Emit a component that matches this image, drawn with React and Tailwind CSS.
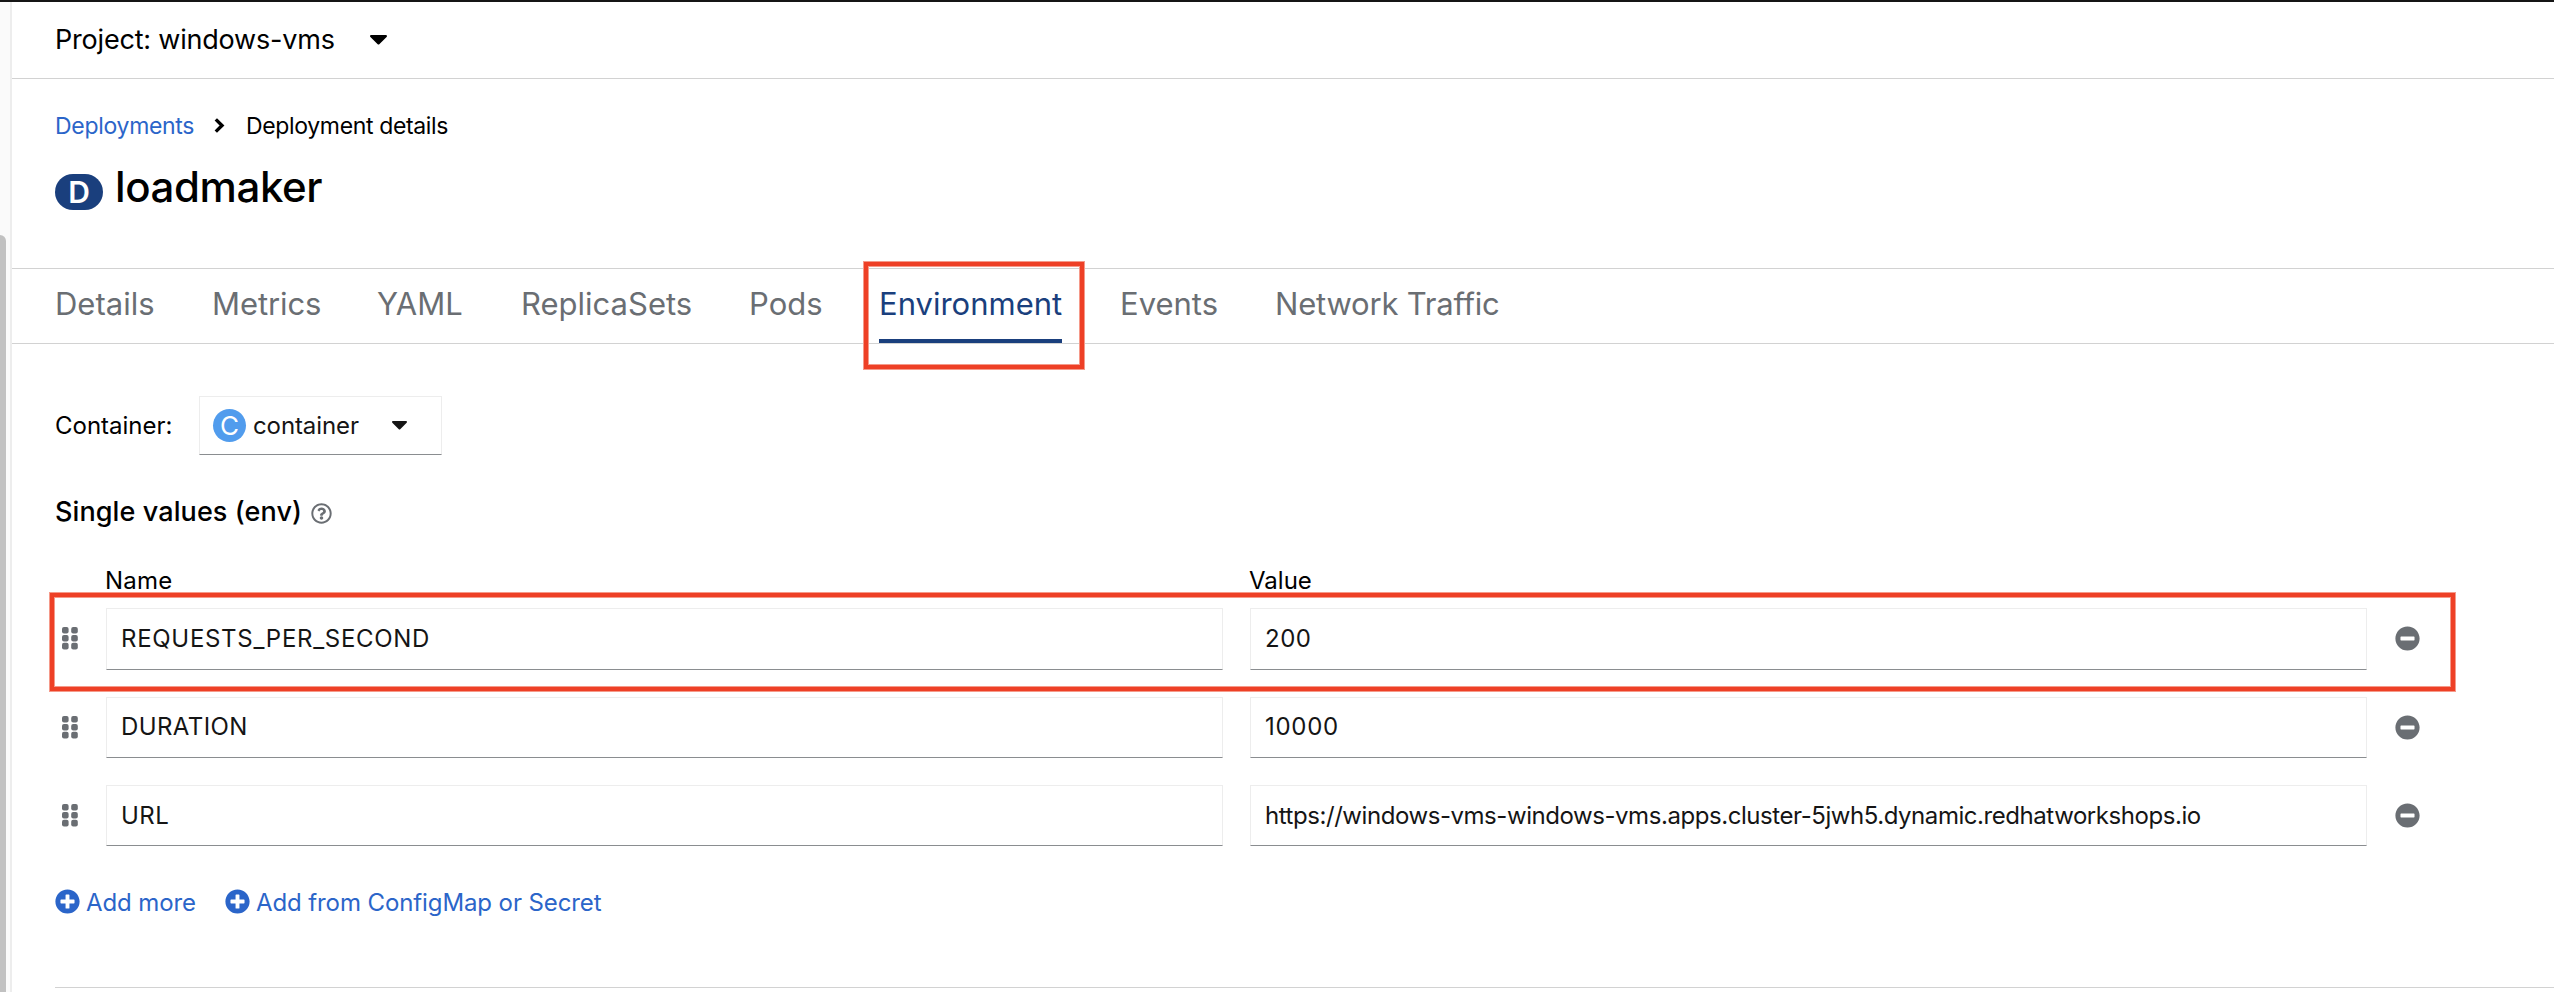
import { FaMinusCircle, FaPlusCircle, FaRegQuestionCircle } from "react-icons/fa";

const tabs = [
  { label: "Details", width: "w-[100px]" },
  { label: "Metrics", width: "w-[108px]", tracking: "tracking-[-0.1px]" },
  { label: "YAML", width: "w-[87px]" },
  { label: "ReplicaSets", width: "w-[170px]" },
  { label: "Pods", width: "w-[74px]", tracking: "pl-px" },
  { label: "Environment", width: "w-[183px]", active: true },
  { label: "Events", width: "w-[98px]", tracking: "pl-px" },
  { label: "Network Traffic", width: "w-[230px]", tracking: "pl-px tracking-[-0.2px]" },
];

const rows = [
  {
    name: "REQUESTS_PER_SECOND",
    value: "200",
    height: "h-[62px]",
    nameTracking: "tracking-[0.7px]",
    valueTracking: "tracking-[0.5px]",
    highlighted: true,
  },
  {
    name: "DURATION",
    value: "10000",
    height: "h-[61px]",
    nameTracking: "tracking-[0.4px]",
    valueTracking: "tracking-[0.7px]",
    inset: "pb-px",
  },
  {
    name: "URL",
    value: "https://windows-vms-windows-vms.apps.cluster-5jwh5.dynamic.redhatworkshops.io",
    height: "h-[61px]",
    nameTracking: "tracking-[0.5px]",
    valueTracking: "tracking-[-0.44px]",
  },
];

function Caret({ className = "h-[9.6px] w-[17px]" }) {
  return (
    <svg className={`shrink-0 ${className}`} viewBox="11 192 298 169" fill="currentColor" aria-hidden="true">
      <path d="M31.3 192h257.3c17.8 0 26.7 21.5 14.1 34.1L174.1 354.8c-7.8 7.8-20.5 7.8-28.3 0L17.2 226.1C4.6 213.5 13.5 192 31.3 192z" />
    </svg>
  );
}

function Grip() {
  return (
    <svg className="h-[23px] w-4 shrink-0 text-[#6a6e73]" viewBox="0 0 16 23" fill="currentColor" aria-hidden="true">
      {[0, 7.9, 15.8].map((y) => (
        <g key={y}>
          <rect x="0" y={y} width="6.6" height="6.6" rx="2" />
          <rect x="9.2" y={y} width="6.6" height="6.6" rx="2" />
        </g>
      ))}
    </svg>
  );
}

function Highlight({ className }) {
  return (
    <div
      className={`pointer-events-none absolute border-4 border-[#ee4026] shadow-[0_0_0_1px_#f59a8a,inset_0_0_0_1px_#f59a8a] ${className}`}
    />
  );
}

function Field({ children, tracking, inset = "" }) {
  return (
    <div
      className={`flex h-full w-[1117px] items-center border border-[#ededed] border-b-[#8a8d90] pl-3.5 text-2xl text-[#151515] ${inset}`}
    >
      <span className={`whitespace-nowrap ${tracking}`}>{children}</span>
    </div>
  );
}

function EnvRow({ row }) {
  return (
    <div className={`relative flex items-center ${row.height}`}>
      <div className="flex w-[51px] items-center pb-px pl-[6.5px]">
        <Grip />
      </div>
      <Field tracking={row.nameTracking} inset={row.inset}>{row.name}</Field>
      <div className="w-[27px]" />
      <Field tracking={row.valueTracking} inset={row.inset}>{row.value}</Field>
      <FaMinusCircle className="mb-px ml-7 size-[25px] text-[#6a6e73]" />
      {row.highlighted && <Highlight className="-left-[5px] -top-[15px] h-[98px] w-[2405px]" />}
    </div>
  );
}

export default function App() {
  return (
    <div className="flex h-[992px] w-[2554px] flex-col overflow-hidden border-t-2 border-[#151515] bg-white font-['Inter','Liberation_Sans',sans-serif] text-black">
      <div className="flex flex-1">
        <aside className="w-3 shrink-0 border-r-2 border-[#ededed] bg-[#fafafa] pt-[233px]">
          <div className="h-[757px] w-1.5 rounded-tr-[6px] bg-[#c1c1c1]" />
        </aside>

        <main className="min-w-0 flex-1">
          <div className="flex h-[77px] items-center border-b border-[#d2d2d2] pl-[43px]">
            <span className="w-[315px] whitespace-nowrap text-[27px] tracking-[-0.2px]">Project: windows-vms</span>
            <Caret />
          </div>

          <nav className="mt-[31px] flex h-[33px] items-center pl-[43px] text-[23px]">
            <span className="w-[159px] tracking-[-0.3px] text-[#2b65c9]">Deployments</span>
            <svg className="mb-0.5 h-[15px] w-[11px]" viewBox="0 0 11 15" fill="none" stroke="currentColor" strokeWidth="3.4" aria-hidden="true">
              <path d="M1.8 1.4 8 7.5 1.8 13.6" />
            </svg>
            <span className="ml-[21px] tracking-[-0.35px]">Deployment details</span>
          </nav>

          <div className="mt-[15px] flex h-[60px] items-center pl-[43px]">
            <div className="mt-2 flex h-9 w-12 items-center justify-center rounded-[18px] bg-[#1a3f7d] text-[30px] font-semibold leading-none text-white">
              D
            </div>
            <h1 className="mb-[3px] ml-3 text-[42px] font-medium tracking-[-0.4px]">loadmaker</h1>
          </div>

          <div className="mt-[50px] flex h-[76px] gap-[57px] border-y border-[#d2d2d2] pl-[43px] text-[31px]">
            {tabs.map((tab) => (
              <div
                key={tab.label}
                className={`relative flex h-[74px] items-center whitespace-nowrap border-b-4 ${tab.width} ${tab.tracking ?? ""} ${
                  tab.active ? "border-[#1a3f7d] text-[#1a3f7d]" : "border-transparent text-[#6a6e73]"
                }`}
              >
                {tab.label}
                {tab.active && <Highlight className="-left-[15px] -top-[7px] h-[107px] w-[220px]" />}
              </div>
            ))}
          </div>

          <div className="pl-[43px]">
            <div className="mt-[52px] flex h-[59px] items-center text-2xl">
              <span className="w-36">Container:</span>
              <div className="flex h-full w-[243px] items-center border border-[#ededed] border-b-[#8a8d90] pl-[13px] text-[#151515]">
                <span className="flex size-[33px] items-center justify-center rounded-full bg-[#519ced] text-[26px] leading-none text-white">
                  C
                </span>
                <span className="ml-[7px] w-[139px] tracking-[-0.1px]">container</span>
                <Caret className="h-[8.5px] w-[15px]" />
              </div>
            </div>

            <div className="mt-[37px] flex h-10 items-center">
              <h2 className="text-[27px] font-medium tracking-[0.1px]">Single values (env)</h2>
              <FaRegQuestionCircle className="ml-[9px] mt-[3px] size-[21px] text-[#6a6e73]" />
            </div>

            <div className="mt-[35px] flex h-7 items-center text-2xl">
              <span className="ml-[50px] w-[1144px] tracking-[0.2px]">Name</span>
              <span>Value</span>
            </div>

            <div className="mt-[13px] flex flex-col gap-[27px]">
              {rows.map((row) => (
                <EnvRow key={row.name} row={row} />
              ))}
            </div>

            <div className="mt-[38px] flex h-9 items-center text-2xl text-[#2b65c9]">
              <FaPlusCircle className="mb-px size-[25px]" />
              <span className="ml-1.5 mt-0.5 w-[139px] tracking-[-0.1px]">Add more</span>
              <FaPlusCircle className="mb-px size-[25px]" />
              <span className="ml-1.5 mt-0.5 tracking-[-0.1px]">Add from ConfigMap or Secret</span>
            </div>

            <div className="mt-[67px] border-t border-[#d2d2d2]" />
          </div>
        </main>
      </div>
    </div>
  );
}
